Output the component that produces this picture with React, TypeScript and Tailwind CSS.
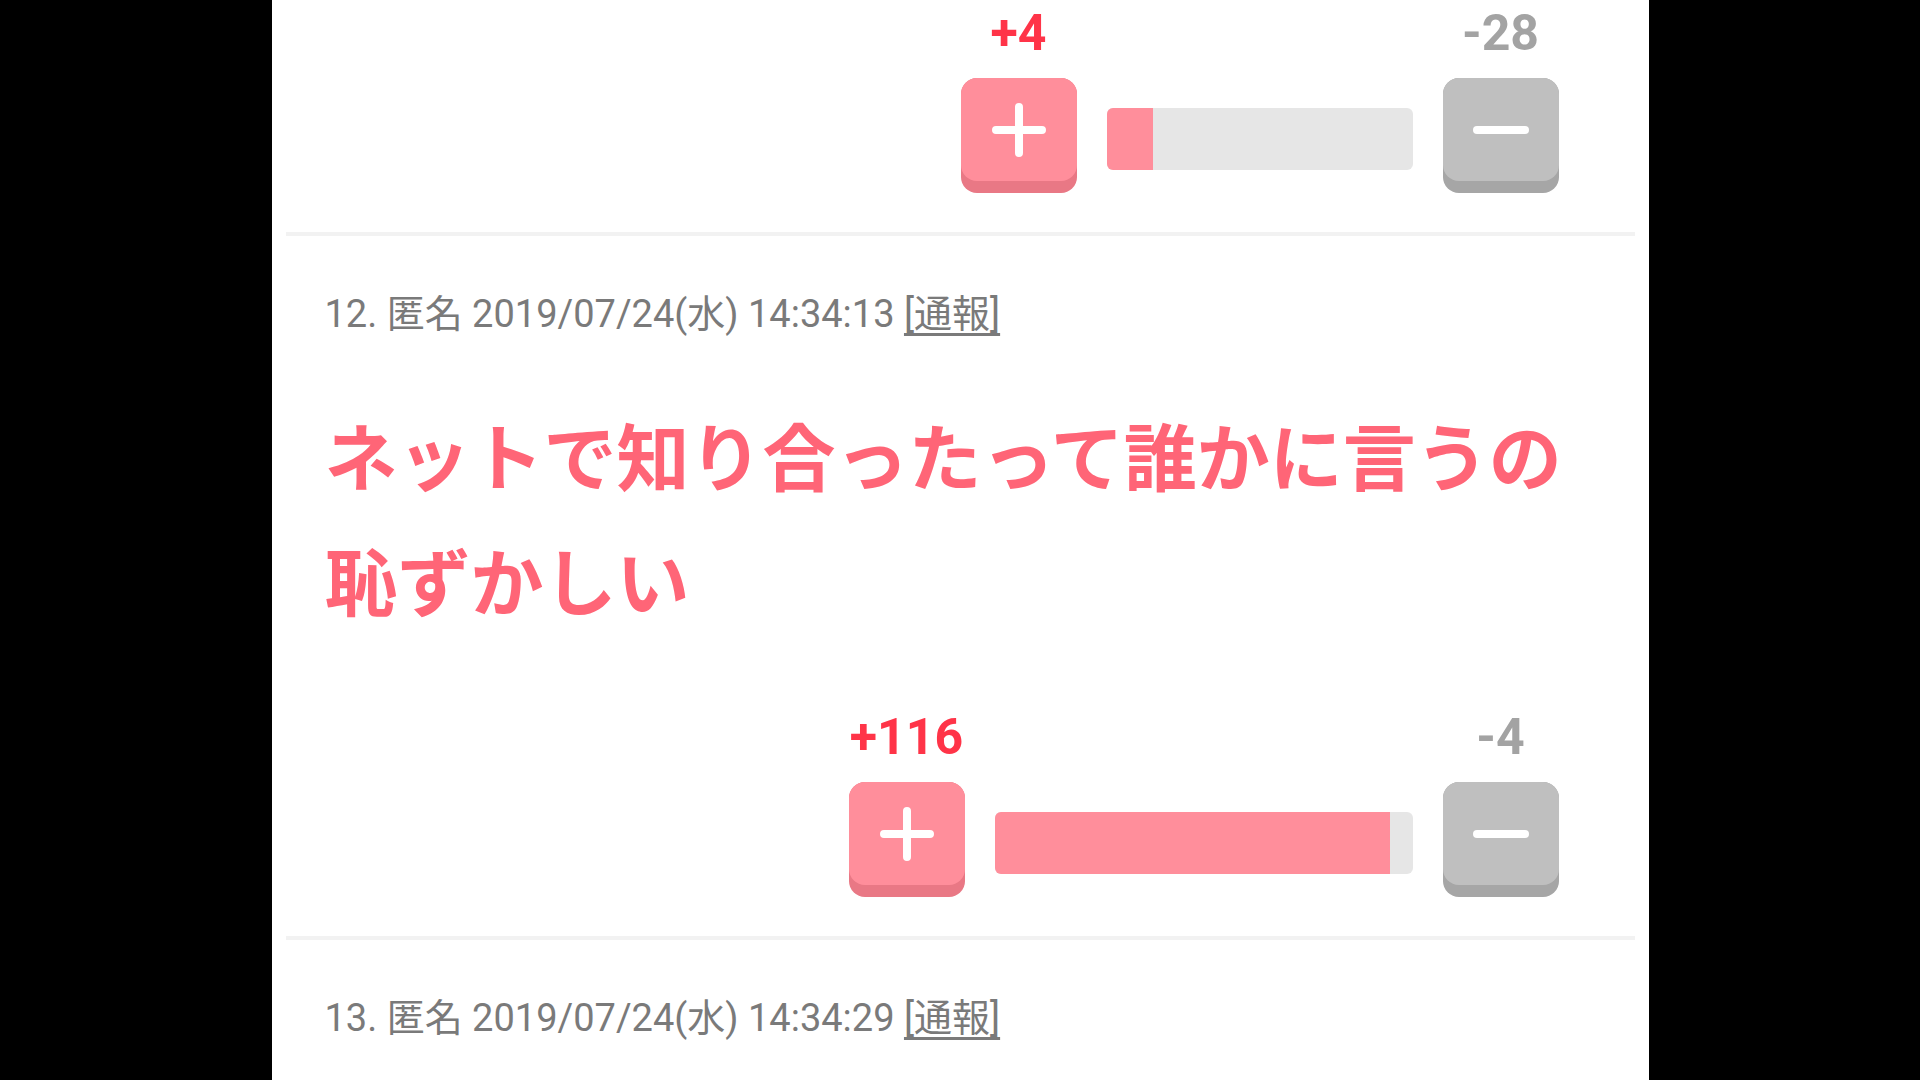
import React from "react";

type Vote = {
  plus: number;
  minus: number;
  barWidth: number;
  fillWidth: number;
};

type Post = {
  no: number;
  date: string;
  body?: string;
  vote?: Vote;
};

const metaFont = { fontFamily: "Roboto, 'Noto Sans CJK JP', sans-serif" };
const bodyFont = { fontFamily: "'Noto Sans CJK JP', 'Noto Sans', sans-serif" };

const PlusIcon = () => (
  <svg width="54" height="54" viewBox="0 0 54 54">
    <path d="M27 4 V50 M4 27 H50" stroke="#ffffff" strokeWidth="8" strokeLinecap="round" />
  </svg>
);

const MinusIcon = () => (
  <svg width="56" height="10" viewBox="0 0 56 10">
    <path d="M4 5 H52" stroke="#ffffff" strokeWidth="8" strokeLinecap="round" />
  </svg>
);

// 押すと沈む風のボタン (下に濃い影)
const VoteButton = ({ kind }: { kind: "plus" | "minus" }) => {
  const isPlus = kind === "plus";
  return (
    <div
      className={
        isPlus
          ? "w-[116px] h-[115px] rounded-[16px] bg-[#e97885] flex flex-col"
          : "w-[116px] h-[115px] rounded-[16px] bg-[#a6a6a6] flex flex-col"
      }
    >
      <div
        className={
          isPlus
            ? "h-[103px] rounded-[16px] bg-[#ff8e9b] flex items-center justify-center"
            : "h-[103px] rounded-[16px] bg-[#bfbfbf] flex items-center justify-center"
        }
      >
        {isPlus ? <PlusIcon /> : <MinusIcon />}
      </div>
    </div>
  );
};

const VoteRow = ({ vote }: { vote: Vote }) => (
  <div className="flex justify-end items-end" style={metaFont}>
    <div className="flex flex-col items-center w-[116px]">
      <span className="h-[60px] leading-[60px] text-[50px] font-bold text-[#ff3448] whitespace-nowrap">
        +{vote.plus}
      </span>
      <div className="mt-[15px]">
        <VoteButton kind="plus" />
      </div>
    </div>
    <div
      className="mx-[30px] mb-[23px] h-[62px] rounded-[6px] bg-[#e6e6e6] overflow-hidden flex"
      style={{ width: vote.barWidth }}
    >
      <div className="h-full bg-[#ff8e9b]" style={{ width: vote.fillWidth }} />
    </div>
    <div className="flex flex-col items-center w-[116px]">
      <span className="h-[60px] leading-[60px] text-[50px] font-bold text-[#a3a3a3] whitespace-nowrap">
        -{vote.minus}
      </span>
      <div className="mt-[15px]">
        <VoteButton kind="minus" />
      </div>
    </div>
  </div>
);

const Divider = () => <div className="h-[4px] bg-[#f2f2f2]" />;

const PostItem = ({ post }: { post: Post }) => (
  <div className="pl-[39px] pr-[76px]">
    <div
      className="pt-[52px] h-[104px] leading-[52px] text-[38px] text-[#7a7a7a] whitespace-nowrap"
      style={metaFont}
    >
      {post.no}. 匿名 {post.date} <span className="underline underline-offset-[6px]">[通報]</span>
    </div>
    {post.body && (
      <p
        className="mt-[51px] mr-[-12px] text-[73px] leading-[125px] font-bold text-[#ff6577]"
        style={bodyFont}
      >
        {post.body}
      </p>
    )}
    {post.vote && (
      <div className="mt-[66px] pb-[39px]">
        <VoteRow vote={post.vote} />
      </div>
    )}
  </div>
);

const posts: Post[] = [
  {
    no: 12,
    date: "2019/07/24(水) 14:34:13",
    body: "ネットで知り合ったって誰かに言うの恥ずかしい",
    vote: { plus: 116, minus: 4, barWidth: 418, fillWidth: 395 },
  },
  { no: 13, date: "2019/07/24(水) 14:34:29" },
];

export default function App() {
  return (
    <div className="w-full h-[1080px] bg-black flex justify-center overflow-hidden">
      <div className="w-[1377px] h-full bg-white px-[14px] overflow-hidden">
        {/* 前のレスの評価欄 (上が切れている) */}
        <div className="pl-[39px] pr-[76px] pt-[3px] pb-[39px]">
          <VoteRow vote={{ plus: 4, minus: 28, barWidth: 306, fillWidth: 46 }} />
        </div>
        {posts.map((post) => (
          <div key={post.no}>
            <Divider />
            <PostItem post={post} />
          </div>
        ))}
      </div>
    </div>
  );
}
